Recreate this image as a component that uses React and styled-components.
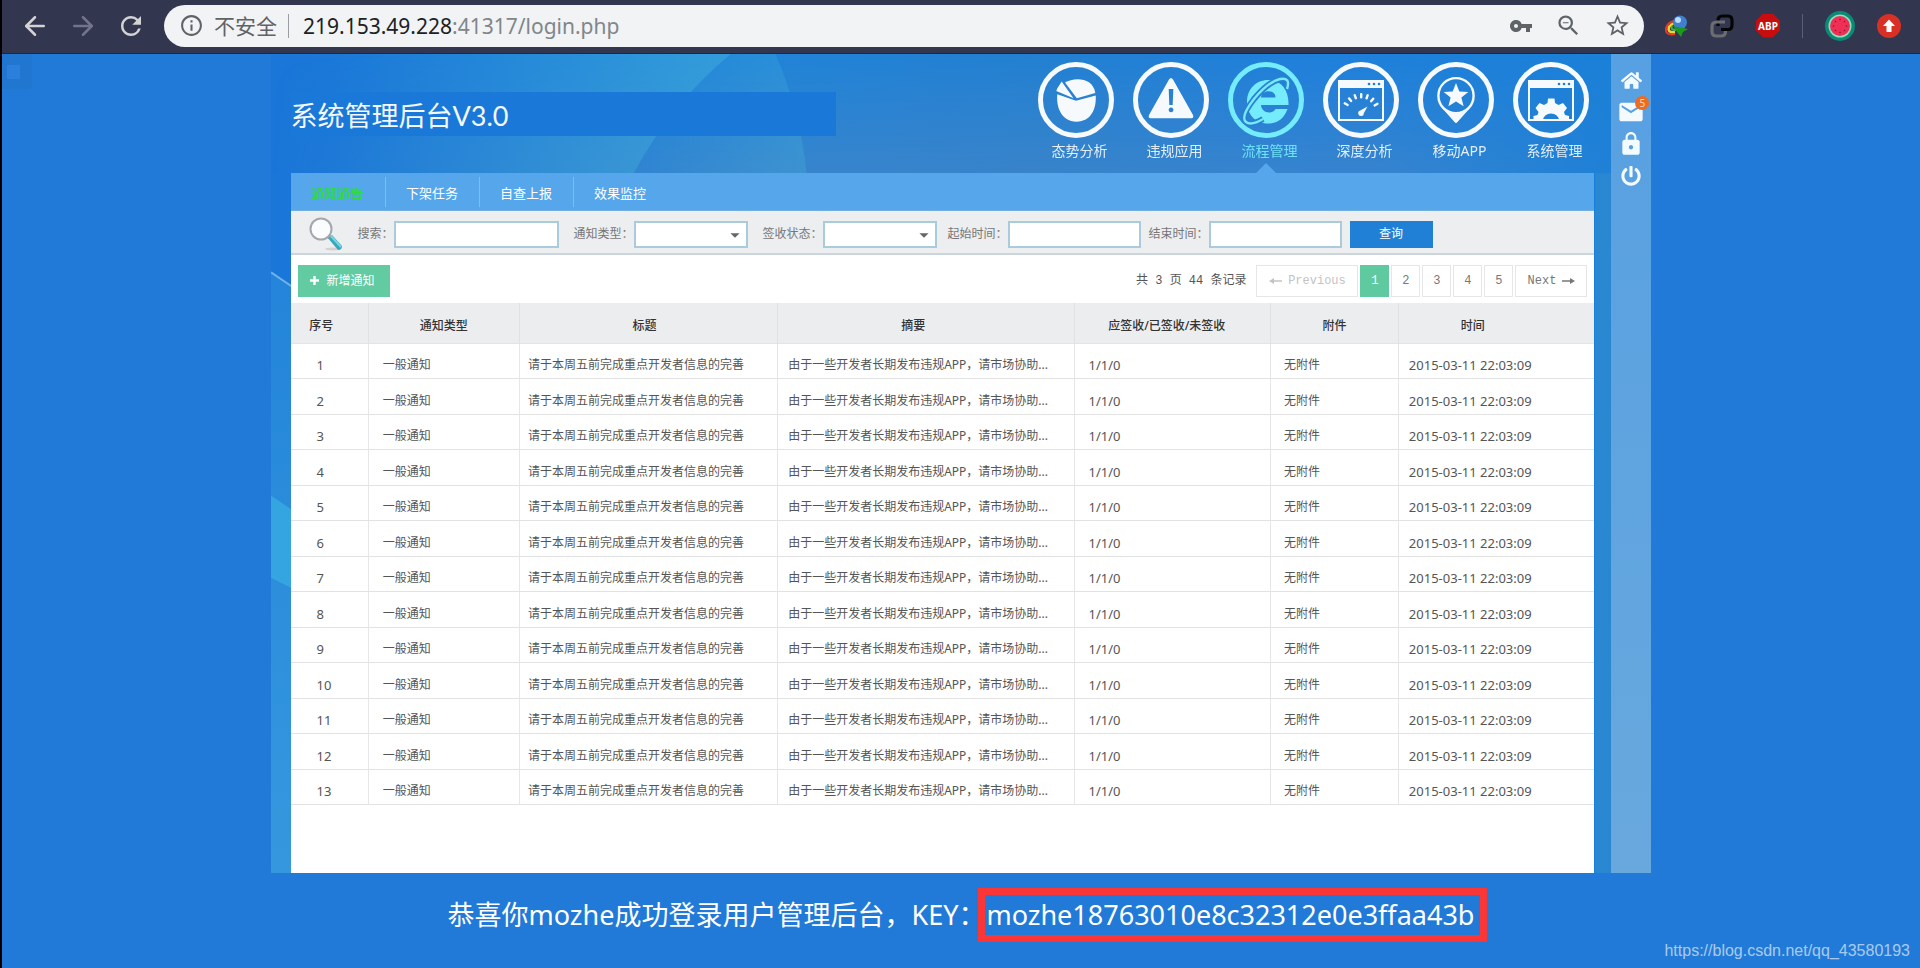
import { useState } from "react";
import styled, { createGlobalStyle, css } from "styled-components";
import { ArrowLeft, ArrowRight } from "lucide-react";
import { FaHome, FaPowerOff } from "react-icons/fa";
import {
  MdArrowDropDown,
  MdInfoOutline,
  MdLock,
  MdMail,
  MdRefresh,
  MdStarBorder,
  MdVpnKey,
  MdZoomOut,
} from "react-icons/md";

const navItems = ["态势分析", "违规应用", "流程管理", "深度分析", "移动APP", "系统管理"];
const tabs = ["通知通告", "下架任务", "自查上报", "效果监控"];
const pages = [1, 2, 3, 4, 5];

// width in %, head: right padding of the header cell, pad: left padding of the body cell
const columns = [
  { label: "序号", width: 6, head: 16, pad: 26 },
  { label: "通知类型", width: 11.6, head: 0, pad: 14 },
  { label: "标题", width: 19.8, head: 8, pad: 8 },
  { label: "摘要", width: 22.8, head: 26, pad: 10 },
  { label: "应签收/已签收/未签收", width: 15, head: 12, pad: 13 },
  { label: "附件", width: 9.8, head: 0, pad: 13 },
  { label: "时间", width: 15, head: 48, pad: 10 },
];

const notices = Array.from({ length: 13 }, (_, i) => ({
  id: i + 1,
  type: "一般通知",
  title: "请于本周五前完成重点开发者信息的完善",
  summary: "由于一些开发者长期发布违规APP，请市场协助...",
  signed: "1/1/0",
  file: "无附件",
  time: "2015-03-11 22:03:09",
}));

const WindowShape = () => (
  <>
    <rect x="16" y="19" width="44" height="39" fill="none" stroke="currentColor" strokeWidth="2" />
    <rect x="15" y="18" width="46" height="8" />
    <g fill="#1f7fd6">
      <circle cx="46" cy="22" r="1.3" />
      <circle cx="51" cy="22" r="1.3" />
      <circle cx="56" cy="22" r="1.3" />
    </g>
  </>
);

const orbit = "M59 27Q63 15 52 17 40 20 26 37 12 55 18 60 23 64 35 57";

const navShapes = [
  <g key="pie">
    <path d="M19.3 32.3 38 38.8 57.7 33.6C58.6 47 53 59.7 38.5 59.7 24 59.7 18 46 19.3 32.3Z" />
    <path d="M27 20.5C36 15 55 15 57.3 31L38.8 36.2Z" />
    <path d="M23.7 19.5 35.5 36.2 18.3 29Q19 26 20.5 24.5Z" />
  </g>,
  <path
    key="warning"
    fillRule="evenodd"
    d="M36 17.5Q38 14.5 40 17.5L60 53Q61 56.3 58.5 56.3H17.5Q15 56.3 16 53ZM35.7 27 36.3 43H39.7L40.3 27ZM38 45.5A2.4 2.4 0 1 0 38.1 45.5Z"
  />,
  <g key="browser">
    <path
      fillRule="evenodd"
      d="M40 18C53 18 61 28 60.5 43H33C33.5 51 44 53 47.5 47H59.5C56 57 49 61.5 40 61.5 27 61.5 19 52 19 40 19 27 28 18 40 18ZM33 35.5H47.5C47.5 27 33.5 27 33 35.5Z"
    />
    <path d={orbit} fill="none" stroke="#2b80d3" strokeWidth="6" />
    <path d={orbit} fill="none" stroke="currentColor" strokeWidth="2.4" />
  </g>,
  <g key="gauge">
    <WindowShape />
    {[-60, -40, -20, 0, 20, 40, 60].map((deg) => (
      <rect key={deg} x="37" y="31" width="2.4" height="5.5" rx="1" transform={`rotate(${deg} 38 51)`} />
    ))}
    <path d="M44.5 44.5 40.8 51.2A2.8 2.8 0 1 1 37.2 48.6Z" />
  </g>,
  <g key="pin">
    <circle cx="38" cy="33.7" r="17.6" fill="none" stroke="currentColor" strokeWidth="2.4" />
    <path d="M20.5 42Q38 62 55.5 42L39.5 60Q38 62 36.5 60Z" />
    <path d="M38 21 41.3 29.4 50.3 30 43.4 35.6 45.6 44.3 38 39.5 30.4 44.3 32.6 35.6 25.7 30 34.7 29.4Z" />
  </g>,
  <g key="gear">
    <WindowShape />
    <path
      fillRule="evenodd"
      d="M20.5 58.5V54L24.5 53 25.5 50 22.5 46 26.5 41 31 43 34.5 41 35 36.5H41.5L42 41 45.5 43 50 41 54 46 51 50 52 53 56 54V58.5ZM30 58.5H46A8 7 0 0 0 30 58.5Z"
    />
  </g>,
];

export default function App() {
  const [activeTab, setActiveTab] = useState(0);
  const [page, setPage] = useState(1);

  return (
    <Screen>
      <GlobalStyle />
      <BrowserBar>
        <BarButton type="button" aria-label="后退">
          <ArrowLeft size={30} />
        </BarButton>
        <BarButton type="button" aria-label="前进" $dim>
          <ArrowRight size={30} />
        </BarButton>
        <BarButton type="button" aria-label="重新加载">
          <MdRefresh size={30} />
        </BarButton>
        <AddressBar>
          <MdInfoOutline size={25} />
          <Insecure>不安全</Insecure>
          <Url>
            <strong>219.153.49.228</strong>:41317/login.php
          </Url>
          <MdVpnKey size={24} />
          <MdZoomOut size={27} />
          <MdStarBorder size={27} />
        </AddressBar>
        <Extensions>
          <GlobeIcon />
          <LinkIcon />
          <AdBlock>ABP</AdBlock>
          <BarDivider />
          <MelonIcon />
          <UpdateIcon />
        </Extensions>
      </BrowserBar>

      <Content>
        <CornerBox />
        <Frame>
          <Scenery />
          <Main>
            <Header>
              <Title>系统管理后台V3.0</Title>
              <Nav>
                {navItems.map((label, i) => (
                  <NavItem key={label} href="#" $active={i === 2}>
                    <Ring>
                      <svg width="76" height="76" viewBox="0 0 76 76" fill="currentColor">
                        {navShapes[i]}
                      </svg>
                    </Ring>
                    <NavLabel>{label}</NavLabel>
                  </NavItem>
                ))}
              </Nav>
            </Header>

            <Panel>
              <TabBar>
                {tabs.map((tab, i) => (
                  <Tab key={tab} type="button" $active={i === activeTab} onClick={() => setActiveTab(i)}>
                    {tab}
                  </Tab>
                ))}
              </TabBar>

              <SearchBar onSubmit={(e) => e.preventDefault()}>
                <SearchGroup $gap={15}>
                  <SearchIcon />
                  <Field>
                    搜索：
                    <Input type="text" $width={165} />
                  </Field>
                  <Field>
                    通知类型：
                    <SelectBox>
                      <Select defaultValue="" />
                      <MdArrowDropDown size={22} />
                    </SelectBox>
                  </Field>
                  <Field>
                    签收状态：
                    <SelectBox>
                      <Select defaultValue="" />
                      <MdArrowDropDown size={22} />
                    </SelectBox>
                  </Field>
                </SearchGroup>
                <SearchGroup $gap={8}>
                  <Field>
                    起始时间：
                    <Input type="text" $width={133} />
                  </Field>
                  <Field>
                    结束时间：
                    <Input type="text" $width={133} />
                  </Field>
                  <QueryButton type="submit">查询</QueryButton>
                </SearchGroup>
              </SearchBar>

              <Toolbar>
                <AddButton type="button">
                  <svg width="9" height="9" viewBox="0 0 9 9" stroke="currentColor" strokeWidth="2.4">
                    <path d="M4.5 0V9M0 4.5H9" />
                  </svg>
                  新增通知
                </AddButton>
                <Pager>
                  <Total>共 3 页 44 条记录</Total>
                  <PageButton type="button" $wide disabled={page === 1} onClick={() => setPage(page - 1)}>
                    <Arrow left /> Previous
                  </PageButton>
                  {pages.map((n) => (
                    <PageButton key={n} type="button" $active={n === page} onClick={() => setPage(n)}>
                      {n}
                    </PageButton>
                  ))}
                  <PageButton type="button" $next onClick={() => setPage(Math.min(page + 1, 5))}>
                    Next <Arrow />
                  </PageButton>
                </Pager>
              </Toolbar>

              <Table>
                <colgroup>
                  {columns.map((col) => (
                    <Col key={col.label} $width={col.width} />
                  ))}
                </colgroup>
                <thead>
                  <tr>
                    {columns.map((col) => (
                      <Th key={col.label} $shift={col.head}>
                        {col.label}
                      </Th>
                    ))}
                  </tr>
                </thead>
                <tbody>
                  {notices.map((row) => (
                    <Row key={row.id}>
                      <Td $pad={columns[0].pad} $number>{row.id}</Td>
                      <Td $pad={columns[1].pad}>{row.type}</Td>
                      <Td $pad={columns[2].pad}>{row.title}</Td>
                      <Td $pad={columns[3].pad}>{row.summary}</Td>
                      <Td $pad={columns[4].pad} $number>{row.signed}</Td>
                      <Td $pad={columns[5].pad}>{row.file}</Td>
                      <Td $pad={columns[6].pad} $number>{row.time}</Td>
                    </Row>
                  ))}
                </tbody>
              </Table>
            </Panel>
          </Main>

          <Rail>
            <RailButton type="button" aria-label="首页">
              <FaHome size={21} />
            </RailButton>
            <RailButton type="button" aria-label="消息">
              <MdMail size={28} />
              <Badge>5</Badge>
            </RailButton>
            <RailButton type="button" aria-label="锁定">
              <MdLock size={26} />
            </RailButton>
            <RailButton type="button" aria-label="退出">
              <FaPowerOff size={20} />
            </RailButton>
          </Rail>
        </Frame>

        <Message>
          恭喜你mozhe成功登录用户管理后台，KEY：
          <Key>mozhe18763010e8c32312e0e3ffaa43b</Key>
        </Message>
        <Watermark href="https://blog.csdn.net/qq_43580193">https://blog.csdn.net/qq_43580193</Watermark>
      </Content>
    </Screen>
  );
}

function Arrow({ left }) {
  return (
    <svg width="13" height="8" viewBox="0 0 13 8" fill="currentColor">
      {left ? <path d="M0 4 5 1V3.3H13V4.7H5V7Z" /> : <path d="M13 4 8 1V3.3H0V4.7H8V7Z" />}
    </svg>
  );
}

function Scenery() {
  return (
    <SceneryBox viewBox="0 0 1382 818" preserveAspectRatio="none" aria-hidden="true">
      <defs>
        <linearGradient id="sky" x1="0" x2="1" y1="0" y2="0">
          <stop offset="0" stopColor="#1a76d8" />
          <stop offset="0.3" stopColor="#2085da" />
          <stop offset="0.55" stopColor="#2380d2" />
          <stop offset="0.75" stopColor="#1f80dc" />
          <stop offset="1" stopColor="#1b80d8" />
        </linearGradient>
        <linearGradient id="fall" x1="0" x2="0" y1="0" y2="1">
          <stop offset="0" stopColor="#4a86c4" stopOpacity="0" />
          <stop offset="1" stopColor="#4a86c4" stopOpacity="0.55" />
        </linearGradient>
        <linearGradient id="fade" x1="0" x2="1" y1="0" y2="0">
          <stop offset="0" stopColor="#fff" stopOpacity="0" />
          <stop offset="0.35" stopColor="#fff" />
          <stop offset="0.8" stopColor="#fff" />
          <stop offset="1" stopColor="#fff" stopOpacity="0" />
        </linearGradient>
        <mask id="middle">
          <rect width="1382" height="119" fill="url(#fade)" />
        </mask>
        <linearGradient id="beam" x1="0" x2="1" y1="0" y2="0">
          <stop offset="0" stopColor="#3fb4dc" stopOpacity="0" />
          <stop offset="1" stopColor="#4fc0dc" stopOpacity="0.4" />
        </linearGradient>
        <linearGradient id="side" x1="0" x2="0" y1="0" y2="1">
          <stop offset="0" stopColor="#2384d9" />
          <stop offset="1" stopColor="#3598de" />
        </linearGradient>
      </defs>
      <rect width="1382" height="818" fill="url(#sky)" />
      <rect width="1382" height="119" fill="url(#fall)" mask="url(#middle)" />
      <path d="M60 119V0H460Q400 50 363 119Z" fill="url(#beam)" />
      <path d="M363 119Q400 50 460 0H505Q530 60 536 119Z" fill="url(#beam)" opacity="0.6" />
      <path d="M0 218 22 233V818H0Z" fill="url(#side)" />
      <path d="M0 218 22 233" stroke="#6fb4ea" strokeWidth="2" />
      <path d="M0 441 22 456V534L0 523Z" fill="#35a5e2" />
      <rect x="1325" y="119" width="18" height="699" fill="#2f8ad0" opacity="0.7" />
    </SceneryBox>
  );
}

function SearchIcon() {
  return (
    <svg width="34" height="34" viewBox="0 0 34 34">
      <ellipse cx="24" cy="32" rx="8" ry="1.5" fill="#d9cfd0" />
      <path d="M18 20 23 18 33 29Q33 33 29 33Z" fill="#35a9bd" />
      <path d="M20 20 22 19 32 30" fill="none" stroke="#7fd3dd" strokeWidth="2" />
      <path d="M17 17 21 21" stroke="#8b9499" strokeWidth="3" />
      <circle cx="12" cy="12" r="10.5" fill="#fbfcfd" stroke="#a3a8ac" strokeWidth="2" />
    </svg>
  );
}

function GlobeIcon() {
  return (
    <svg width="24" height="24" viewBox="0 0 24 24" fill="none">
      <path d="M11 20Q1 22 2 14 4 8 10 7" stroke="#e23b2e" strokeWidth="2" />
      <path d="M11 18Q3 19 5 13 7 10 11 9" stroke="#f2d433" strokeWidth="2.4" />
      <path d="M12 16Q6 16 8 12" stroke="#3fb54a" strokeWidth="2" />
      <circle cx="16" cy="8.5" r="7" fill="#3f7fd0" />
      <circle cx="14" cy="6" r="3" fill="#b9dcf8" />
      <path d="M9 12 24 15 19 18 17 23 13 18Z" fill="#1c9a1c" />
    </svg>
  );
}

function LinkIcon() {
  return (
    <svg width="24" height="24" viewBox="0 0 24 24" fill="none" strokeWidth="3.2">
      <path d="M8 12V6.5Q8 2 12.5 2H18Q22 2 22 6.5V11Q22 15.5 18 15.5H11" stroke="#050506" />
      <path d="M15 8H6.5Q2 8 2 12.5V18Q2 22 6.5 22H11Q15.5 22 15.5 17.5V17" stroke="#6c6d73" />
    </svg>
  );
}

function MelonIcon() {
  return (
    <svg width="30" height="30" viewBox="0 0 30 30">
      <circle cx="15" cy="15" r="15" fill="#0b8a78" />
      <circle cx="15" cy="15" r="11.5" fill="#8fe0b8" />
      <circle cx="15" cy="15" r="10" fill="#f02f57" />
      <g fill="#7c1d35">
        <circle cx="15" cy="8.5" r="0.8" />
        <circle cx="15" cy="21.5" r="0.8" />
        <circle cx="8.5" cy="15" r="0.8" />
        <circle cx="21.5" cy="15" r="0.8" />
        <circle cx="10.5" cy="10.5" r="0.8" />
        <circle cx="19.5" cy="10.5" r="0.8" />
        <circle cx="10.5" cy="19.5" r="0.8" />
        <circle cx="19.5" cy="19.5" r="0.8" />
      </g>
    </svg>
  );
}

function UpdateIcon() {
  return (
    <svg width="24" height="24" viewBox="0 0 24 24">
      <circle cx="12" cy="12" r="12" fill="#d93025" />
      <path d="M12 5.5 18 12H14.5V18H9.5V12H6Z" fill="#fff" />
    </svg>
  );
}

const GlobalStyle = createGlobalStyle`
  * { box-sizing: border-box; }
  body {
    margin: 0;
    font-family: "Noto Sans", "Noto Sans CJK SC", sans-serif;
  }
  button, input, select { font: inherit; }
  svg { flex: none; display: block; }
`;

const Screen = styled.div`
  min-height: 100vh;
  display: flex;
  flex-direction: column;
  background: #217ad7;
  border-left: 2px solid #000;
`;

const BrowserBar = styled.header`
  display: flex;
  align-items: center;
  height: 54px;
  padding: 0 19px 2px 18px;
  background: #32364f;
  border-bottom: 1px solid #23263a;
`;

const BarButton = styled.button`
  display: flex;
  padding: 0;
  margin-right: 18px;
  border: 0;
  background: none;
  color: ${({ $dim }) => ($dim ? "#72758a" : "#d4d3d3")};
`;

const AddressBar = styled.div`
  flex: 1;
  display: flex;
  align-items: center;
  height: 42px;
  padding: 0 13px 0 15px;
  border-radius: 21px;
  background: #f1f3f4;
  color: #5f6368;
  font-size: 21px;
  line-height: 24px;

  & > svg + svg {
    margin-left: 22px;
  }
`;

const Insecure = styled.span`
  margin-left: 10px;
  padding-right: 11px;
  border-right: 1px solid #9a9da1;
`;

const Url = styled.span`
  flex: 1;
  padding-left: 14px;
  color: #80868b;

  strong {
    font-weight: 400;
    color: #202124;
  }
`;

const Extensions = styled.div`
  display: flex;
  align-items: center;
  gap: 22px;
  margin-left: 20px;
`;

const AdBlock = styled.span`
  width: 24px;
  height: 24px;
  background: #c70d0d;
  color: #fff;
  font-size: 10px;
  font-weight: 700;
  line-height: 24px;
  text-align: center;
  clip-path: polygon(30% 0, 70% 0, 100% 30%, 100% 70%, 70% 100%, 30% 100%, 0 70%, 0 30%);
`;

const BarDivider = styled.span`
  width: 1px;
  height: 24px;
  background: #5c6076;
`;

const Content = styled.main`
  position: relative;
  flex: 1;
  display: flex;
  flex-direction: column;
  align-items: center;
`;

const CornerBox = styled.div`
  position: absolute;
  top: 0;
  left: 0;
  width: 30px;
  height: 35px;
  padding: 11px 5px;
  border-radius: 0 0 5px 0;
  background: #2176d0;

  &::before {
    content: "";
    display: block;
    width: 13px;
    height: 14px;
    background: #2a80dc;
  }
`;

const Frame = styled.div`
  position: relative;
  display: flex;
  width: 72%;
`;

const SceneryBox = styled.svg`
  position: absolute;
  inset: 0;
  width: 100%;
  height: 100%;
`;

const Main = styled.div`
  position: relative;
  flex: 1;
  min-width: 0;
  padding: 0 17px 0 20px;
`;

const Header = styled.div`
  display: flex;
  justify-content: space-between;
  height: 119px;
  padding-right: 5px;
`;

const Title = styled.h1`
  display: flex;
  align-items: center;
  width: 42%;
  height: 44px;
  margin: 38px 0 0;
  background: #1978d8;
  color: #f4f8fd;
  font-family: Lato, "Noto Sans CJK SC", sans-serif;
  font-size: 27px;
  font-weight: 400;
`;

const Nav = styled.nav`
  display: flex;
  gap: 19px;
  padding-top: 8px;
`;

const NavItem = styled.a`
  display: flex;
  flex-direction: column;
  align-items: center;
  color: #f6fafd;
  text-decoration: none;

  ${({ $active }) =>
    $active &&
    css`
      color: #74ecfb;

      &::after {
        content: "";
        margin-top: auto;
        border: 10px solid transparent;
        border-top: 0;
        border-bottom-color: #55a6ea;
      }
    `}
`;

const Ring = styled.span`
  display: flex;
  align-items: center;
  justify-content: center;
  width: 76px;
  height: 76px;
  border: 5px solid currentColor;
  border-radius: 50%;
`;

const NavLabel = styled.span`
  margin-top: 5px;
  padding-left: 6px;
  font-size: 14px;
  line-height: 16px;
  opacity: 0.9;
`;

const Panel = styled.section`
  padding-bottom: 68px;
  background: #fff;
  color: #555;
  font-size: 12px;
  line-height: 16px;
`;

const TabBar = styled.div`
  display: flex;
  align-items: center;
  height: 38px;
  background: #55a6ea;
  border-bottom: 1px solid #72aede;
`;

const Tab = styled.button`
  width: 94px;
  height: 30px;
  padding: 2px 0 0;
  border: 0;
  background: none;
  color: ${({ $active }) => ($active ? "#2bdc3c" : "#fff")};
  font-size: 13px;
  font-weight: ${({ $active }) => ($active ? 700 : 400)};

  & + & {
    border-left: 1px solid #7fbcf0;
  }
`;

const SearchBar = styled.form`
  display: flex;
  align-items: center;
  gap: 11px;
  height: 44px;
  padding: 4px 0 0 18px;
  background: #edeef0;
  border-bottom: 2px solid #cbd6dc;
`;

const SearchGroup = styled.div`
  display: flex;
  align-items: center;
  gap: ${({ $gap }) => $gap}px;
`;

const Field = styled.label`
  display: flex;
  align-items: center;
  white-space: nowrap;
  color: #777;
`;

const box = css`
  height: 27px;
  border: 2px solid #a9ccdc;
  border-radius: 0;
  background: #fff;
`;

const Input = styled.input`
  ${box}
  width: ${({ $width }) => $width}px;
`;

const SelectBox = styled.span`
  position: relative;
  display: flex;

  svg {
    position: absolute;
    right: 2px;
    top: 3px;
    color: #666;
    pointer-events: none;
  }
`;

const Select = styled.select`
  ${box}
  width: 114px;
  appearance: none;
`;

const QueryButton = styled.button`
  width: 83px;
  height: 27px;
  border: 0;
  background: #1f80d6;
  color: #fff;
`;

const Toolbar = styled.div`
  display: flex;
  align-items: center;
  justify-content: space-between;
  height: 48px;
  padding: 3px 7px 0;
`;

const AddButton = styled.button`
  display: flex;
  align-items: center;
  gap: 8px;
  height: 32px;
  padding: 0 15px 0 12px;
  border: 0;
  background: #62cba2;
  color: #fff;
`;

const Pager = styled.div`
  display: flex;
  align-items: center;
  gap: 2px;
`;

const Total = styled.span`
  margin-right: 8px;
  font-family: "Liberation Mono", "Noto Sans CJK SC", monospace;
`;

const PageButton = styled.button`
  display: flex;
  align-items: center;
  justify-content: center;
  gap: 6px;
  width: ${({ $wide, $next }) => ($wide ? 102 : $next ? 72 : 29)}px;
  height: 32px;
  padding: 0;
  border: 1px solid #e4e6e8;
  background: #fff;
  color: #777;
  font-family: "Liberation Mono", monospace;

  &:disabled {
    color: #c3c3c3;
  }

  ${({ $active }) =>
    $active &&
    css`
      border-color: #5fcaa0;
      background: #5fcaa0;
      color: #fff;
    `}
`;

const Table = styled.table`
  width: 100%;
  table-layout: fixed;
  border-spacing: 0;
`;

const Col = styled.col`
  width: ${({ $width }) => $width}%;
`;

const Th = styled.th`
  height: 41px;
  padding: 6px ${({ $shift }) => $shift}px 0 0;
  background: #ecedef;
  border-right: 1px solid #dfe1e4;
  border-bottom: 1px solid #e2e4e6;
  color: #333;
  font-weight: 500;

  &:last-child {
    border-right: 0;
  }
`;

const Td = styled.td`
  height: 35px;
  padding: 8px 0 0 ${({ $pad }) => $pad}px;
  border-right: 1px solid #e6e6e6;
  border-bottom: 1px solid #e2e2e2;
  font-size: ${({ $number }) => ($number ? 13 : 12)}px;
  white-space: nowrap;

  &:last-child {
    border-right: 0;
  }
`;

const Row = styled.tr`
  &:nth-child(even) ${Td} {
    height: 36px;
  }
`;

const Rail = styled.aside`
  position: relative;
  display: flex;
  flex-direction: column;
  align-items: center;
  gap: 6px;
  width: 40px;
  padding-top: 13px;
  background: linear-gradient(#57a0e2, #68a8dd);
`;

const RailButton = styled.button`
  position: relative;
  display: flex;
  align-items: center;
  height: 26px;
  padding: 0;
  border: 0;
  background: none;
  color: #f4fbff;
`;

const Badge = styled.span`
  position: absolute;
  top: -3px;
  right: -4px;
  width: 14px;
  height: 14px;
  border-radius: 50%;
  background: #ee6c1e;
  color: #fbd9bd;
  font-size: 10px;
  line-height: 14px;
  text-align: center;
`;

const Message = styled.p`
  display: flex;
  align-items: center;
  margin: 22px 0 34px;
  color: #fff;
  font-size: 27px;
  line-height: 40px;
`;

const Key = styled.span`
  margin-right: -6px;
  padding: 0 6px 0 1px;
  outline: 7px solid #fb3636;
`;

const Watermark = styled.a`
  position: absolute;
  right: 10px;
  bottom: 8px;
  color: rgba(255, 255, 255, 0.62);
  font-family: "Liberation Sans", sans-serif;
  font-size: 16px;
  line-height: 20px;
  text-decoration: none;
`;
